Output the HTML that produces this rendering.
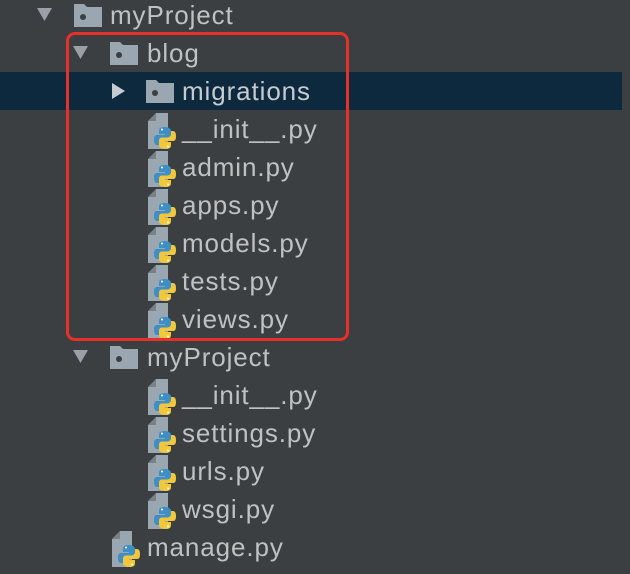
<!DOCTYPE html>
<html><head><style>
body{margin:0;width:630px;height:574px;background:#3c3f41;overflow:hidden;position:relative;font-family:"Liberation Sans",sans-serif}
.sel{position:absolute;left:0;top:72px;width:622px;height:38px;background:#0d293e}
.row{position:absolute;height:38px;display:flex;align-items:center;color:#bfc1c3;font-size:26px;letter-spacing:0.9px;white-space:nowrap}
.box{position:absolute;left:66px;top:32px;width:277px;height:303px;border:3px solid #e8302a;border-radius:9px}
</style></head><body>
<div class="sel"></div>
<svg width="0" height="0" style="position:absolute">
<defs>
<symbol id="fold" viewBox="0 0 28 24"><path d="M0 1h10l3 3h15v20H0z" fill="#9aa7b0"/><circle cx="9" cy="14" r="3" fill="#3c3f41"/></symbol>
<symbol id="py" viewBox="0 0 28 36"><path d="M0 36V8L8 0h12v36z" fill="#9aa7b0"/><path d="M0 8h8V0z" fill="#3c3f41" opacity=".35"/>
<path d="M17 14c-5 0-6 1.5-6 4v3h6v1h-8c-2.5 0-3 2-3 5s1 5 3 5h2v-3c0-2 1.5-3.5 4-3.5h5c2 0 3-1.5 3-3v-4.5c0-2-2-4-6-4z" fill="#3d8fc6"/>
<path d="M17 36c5 0 6-1.5 6-4v-3h-6v-1h8c2.5 0 3-2 3-5s-1-5-3-5h-2v3c0 2-1.5 3.5-4 3.5h-5c-2 0-3 1.5-3 3v4.5c0 2 2 4 6 4z" fill="#f2c73c"/>
<circle cx="14" cy="16.5" r="1" fill="#fff"/><circle cx="20" cy="33.5" r="1" fill="#fff"/></symbol>
</defs></svg>

<svg style="position:absolute;left:0;top:0" width="630" height="574">
<path d="M37 8h15l-7.5 13z" fill="#9aa0a6"/>
<path d="M73 46h15l-7.5 13z" fill="#9aa0a6"/>
<path d="M73 350h15l-7.5 13z" fill="#9aa0a6"/>
<path d="M112 83v16l13-8z" fill="#c5cbd0"/>
<use href="#fold" x="74" y="3" width="28" height="24"/>
<use href="#fold" x="110" y="41" width="28" height="24"/>
<use href="#fold" x="146" y="79" width="28" height="24"/>
<use href="#fold" x="110" y="345" width="28" height="24"/>
<use href="#py" x="148" y="113" width="28" height="36"/>
<use href="#py" x="148" y="151" width="28" height="36"/>
<use href="#py" x="148" y="189" width="28" height="36"/>
<use href="#py" x="148" y="227" width="28" height="36"/>
<use href="#py" x="148" y="265" width="28" height="36"/>
<use href="#py" x="148" y="303" width="28" height="36"/>
<use href="#py" x="148" y="379" width="28" height="36"/>
<use href="#py" x="148" y="417" width="28" height="36"/>
<use href="#py" x="148" y="455" width="28" height="36"/>
<use href="#py" x="148" y="493" width="28" height="36"/>
<use href="#py" x="112" y="531" width="28" height="36"/>
</svg>

<div class="row" style="left:110px;top:-4px">myProject</div>
<div class="row" style="left:147px;top:34px">blog</div>
<div class="row" style="left:182px;top:72px;color:#c6cbd0">migrations</div>
<div class="row" style="left:182px;top:110px">__init__.py</div>
<div class="row" style="left:182px;top:148px">admin.py</div>
<div class="row" style="left:182px;top:186px">apps.py</div>
<div class="row" style="left:182px;top:224px">models.py</div>
<div class="row" style="left:182px;top:262px">tests.py</div>
<div class="row" style="left:182px;top:300px">views.py</div>
<div class="row" style="left:147px;top:338px">myProject</div>
<div class="row" style="left:182px;top:376px">__init__.py</div>
<div class="row" style="left:182px;top:414px">settings.py</div>
<div class="row" style="left:182px;top:452px">urls.py</div>
<div class="row" style="left:182px;top:490px">wsgi.py</div>
<div class="row" style="left:147px;top:528px">manage.py</div>
<div class="box"></div>
</body></html>
